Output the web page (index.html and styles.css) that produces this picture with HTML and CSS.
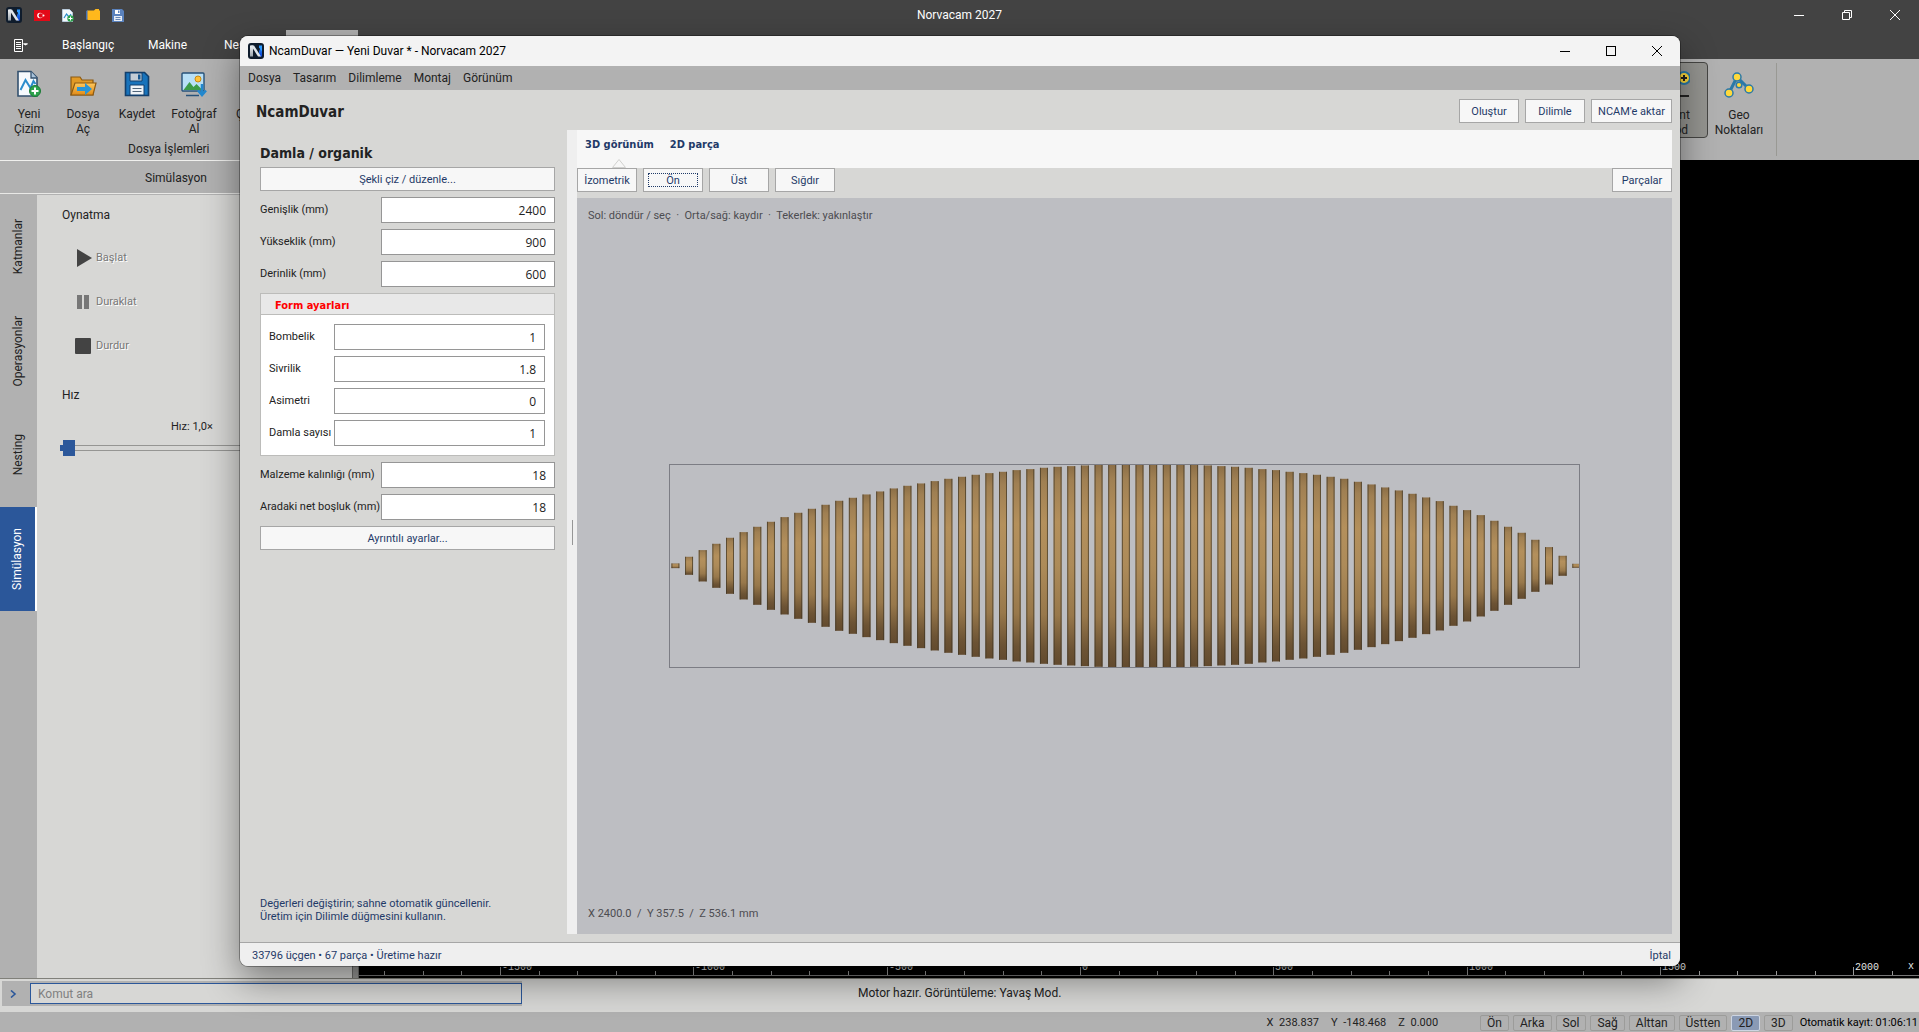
FILE: index.html
```html
<!DOCTYPE html>
<html lang="tr">
<head>
<meta charset="utf-8">
<title>Norvacam 2027</title>
<link rel="stylesheet" href="styles.css">
</head>
<body>
<svg class="defs" aria-hidden="true">
  <defs>
    <linearGradient id="steel" x1="0" y1="0" x2="0" y2="1"><stop offset="0" stop-color="#f4f6f8"/><stop offset="1" stop-color="#98a2ab"/></linearGradient>
    <linearGradient id="blue" x1="0" y1="0" x2="0" y2="1"><stop offset="0" stop-color="#2e9bff"/><stop offset="1" stop-color="#0a3fd0"/></linearGradient>
    <linearGradient id="folder" x1="0" y1="0" x2="0" y2="1"><stop offset="0" stop-color="#ffc95e"/><stop offset="1" stop-color="#e08a17"/></linearGradient>
    <linearGradient id="wood" x1="0" y1="0" x2="0" y2="1">
      <stop offset="0" stop-color="#8c6f47"/><stop offset=".07" stop-color="#a08053"/><stop offset=".28" stop-color="#b4905c"/>
      <stop offset=".5" stop-color="#ad8b59"/><stop offset=".75" stop-color="#98784b"/><stop offset=".92" stop-color="#6c5334"/><stop offset="1" stop-color="#624a2e"/>
    </linearGradient>
    <symbol id="logo" viewBox="0 0 16 16">
      <rect width="16" height="16" rx="3" fill="#0f1c2c"/>
      <path d="M11 13.500V8L14 2.500v11z" fill="url(#blue)"/>
      <path d="M11 2.500h3v6l-3-4z" fill="#2e9bff"/>
      <path d="M2 13.500v-11h3v11z" fill="url(#steel)"/>
      <path d="M3 2.500h3l7 11h-3z" fill="#dfe5ea"/>
    </symbol>
    <symbol id="newdoc" viewBox="0 0 28 28">
      <path d="M3 1.500h13l6 6V26H3z" fill="#f6fafd" stroke="#32506e" stroke-width="1.600"/>
      <path d="M16 1.500V8h6" fill="#a9c4dc" stroke="#32506e" stroke-width="1.300"/>
      <path d="M5.500 20l5-10 5 8 3-7 2 3" fill="none" stroke="#2a8ccc" stroke-width="2"/>
      <circle cx="20" cy="21" r="5.500" fill="#2ca24c" stroke="#1b7b36"/>
      <path d="M20 17.500v7M16.500 21h7" stroke="#fff" stroke-width="2"/>
    </symbol>
    <symbol id="save" viewBox="0 0 28 28">
      <path d="M2.500 2.500h19l4 4v19h-23z" fill="#1873bb" stroke="#123f6c" stroke-width="1.600"/>
      <path d="M7 3h12v8H7z" fill="#c4cdd6" stroke="#123f6c"/><path d="M15 4.500h2.500v5H15z" fill="#16568f"/>
      <path d="M7 15h14v10H7z" fill="#eef3f8" stroke="#123f6c"/><path d="M9.500 18.500h9M9.500 21.500h9" stroke="#50657a"/>
    </symbol>
  </defs>
</svg>

<div class="app">
  <header class="caption">
    <div class="quick">
      <svg class="i16" viewBox="0 0 16 16"><use href="#logo"/></svg>
      <svg class="flag" viewBox="0 0 16 11"><rect width="16" height="11" fill="#e30a17"/><circle cx="6" cy="5.500" r="2.800" fill="#fff"/><circle cx="6.800" cy="5.500" r="2.200" fill="#e30a17"/><circle cx="9.500" cy="5.500" r="1" fill="#fff"/></svg>
      <svg class="i12" viewBox="0 0 12 13"><path d="M.5.500h7l3 3v9h-10z" fill="#f4f9fd" stroke="#b9cbdc"/><path d="M2 9l2.500-4L7 8l2-3" fill="none" stroke="#2a8ccc" stroke-width="1.200"/><circle cx="8.500" cy="9.500" r="3.200" fill="#2ca24c"/><path d="M8.500 7.500v4M6.500 9.500h4" stroke="#fff"/></svg>
      <svg class="i14" viewBox="0 0 14 12"><path d="M0 2l2-1v9l-2 1z" fill="#4571b5"/><path d="M1.500 1.500L8 1.500 9.500 0H13v1.500h1V11H1.500z" fill="#ffb81c"/></svg>
      <svg class="i12" viewBox="0 0 12 13"><path d="M0 0h10l2 2v11H0z" fill="#5a82bd"/><path d="M3 1h5v4H3z" fill="#fff"/><path d="M6 1.500h1.500v2.500H6z" fill="#5a82bd"/><path d="M2 7h8v5H2z" fill="#e6edf7"/><path d="M3.500 8.500h5M3.500 10.500h5" stroke="#6787b5"/></svg>
    </div>
    <h1 class="caption-title">Norvacam 2027</h1>
    <div class="win-buttons">
      <button aria-label="Simge durumuna küçült"><svg viewBox="0 0 10 10"><path d="M0 5.500h10" stroke="currentColor"/></svg></button>
      <button aria-label="Geri yükle"><svg viewBox="0 0 10 10"><path d="M.5 2.500h7v7h-7zM2.500 2.500v-2h7v7h-2" fill="none" stroke="currentColor"/></svg></button>
      <button aria-label="Kapat"><svg viewBox="0 0 10 10"><path d="M0 0l10 10M10 0L0 10" stroke="currentColor"/></svg></button>
    </div>
  </header>
  <nav class="tabs">
    <button class="file-tab" aria-label="Dosya menüsü"><svg viewBox="0 0 14 13"><path d="M.5.500h8v12h-8zM2 3.500h5M2 5.500h5M2 7.500h5M2 9.500h5M9.500 5h4" fill="none" stroke="#fff"/><path d="M9 4.500h5l-2.500 2z" fill="#fff"/></svg></button>
    <button class="tab tab-start">Başlangıç</button>
    <button class="tab tab-machine">Makine</button>
    <button class="tab tab-nest">Nesting</button>
    <button class="tab active" aria-label="Simülasyon"></button>
  </nav>
  <section class="ribbon">
    <div class="group">
      <div class="tools">
        <button class="tool"><svg viewBox="0 0 28 28"><use href="#newdoc"/></svg>Yeni<br>Çizim</button>
        <button class="tool"><svg viewBox="0 0 28 28"><path d="M2 25V7h9l2 3h11v15z" fill="#e29a26" stroke="#8c5a12" stroke-width="1.200"/><path d="M2 25l4-12h21l-3 12z" fill="url(#folder)" stroke="#8c5a12" stroke-width="1.200"/><path d="M8 17h8v-4l7 6-7 6v-4H8z" fill="#2a95d5"/></svg>Dosya<br>Aç</button>
        <button class="tool"><svg viewBox="0 0 28 28"><use href="#save"/></svg>Kaydet</button>
        <button class="tool wide"><svg viewBox="0 0 28 28"><rect x="2" y="3" width="22" height="18" rx="1" fill="#b8e0f7" stroke="#27527a" stroke-width="1.400"/><circle cx="18" cy="9" r="3" fill="#ffc23a" stroke="#c98a12"/><path d="M3.500 20l6-8 4 5 3-3 6 6z" fill="#3c9c48"/><path d="M6 25.500h13" stroke="#27527a" stroke-width="1.500"/><path d="M22 14v10M18 20.500l4 4.500 4-4.500" fill="none" stroke="#2389cf" stroke-width="2.500"/></svg>Fotoğraf<br>Al</button>
        <button class="tool"><svg viewBox="0 0 28 28"></svg>Çizim<br>Gör</button>
      </div>
      <div class="group-name">Dosya İşlemleri</div>
    </div>
    <div class="group right">
      <button class="tool pressed"><svg viewBox="0 0 28 28"><circle cx="22" cy="7" r="6" fill="#ffd93b" stroke="#2a79a8" stroke-width="2"/><path d="M22 4v6M19 7h6" stroke="#222" stroke-width="2"/><path d="M4 25h23" stroke="#222" stroke-width="2"/></svg>Point<br>Mod</button>
      <button class="tool geo"><svg viewBox="0 0 30 28"><path d="M5 22L13 6l12 12" fill="none" stroke="#2a79a8" stroke-width="3"/><g fill="#ffd93b" stroke="#2a79a8" stroke-width="1.500"><circle cx="13" cy="6" r="4"/><circle cx="5" cy="22" r="4"/><circle cx="25" cy="18" r="4"/><circle cx="15" cy="14" r="2.800"/></g></svg>Geo<br>Noktaları</button>
    </div>
  </section>

  <main class="workspace">
    <aside class="side">
      <h2 class="side-title">Simülasyon</h2>
      <div class="side-body">
        <nav class="vtabs">
          <button>Katmanlar</button><button>Operasyonlar</button><button>Nesting</button><button class="on">Simülasyon</button>
        </nav>
        <div class="sim">
          <h3>Oynatma</h3>
          <button class="play"><svg viewBox="0 0 18 18"><path d="M3 0l15 9-15 9z" fill="#434343"/></svg>Başlat</button>
          <button class="play"><svg viewBox="0 0 18 18"><path d="M3 2h5v14H3zM10 2h5v14h-5z" fill="#777"/></svg>Duraklat</button>
          <button class="play"><svg viewBox="0 0 18 18"><rect x="1" y="1" width="16" height="16" rx="1" fill="#434343"/></svg>Durdur</button>
          <h3 class="speed">Hız</h3>
          <label for="speed">Hız: 1,0×</label>
          <input id="speed" type="range" min="1" max="10" value="1">
        </div>
      </div>
    </aside>
    <div class="splitter"></div>
    <div class="canvas"><svg class="ruler" id="ruler"></svg></div>
  </main>

  <div class="command">
    <div class="command-box">
      <svg viewBox="0 0 8 8"><path d="M1 .5L5 4 1 7.500" fill="none" stroke="#2b579a" stroke-width="1.600"/></svg>
      <input type="text" placeholder="Komut ara" aria-label="Komut ara">
    </div>
    <div class="message">Motor hazır. Görüntüleme: Yavaş Mod.</div>
  </div>
  <footer class="status">
    <div class="coords"><span>X&ensp;238.837</span><span>Y&ensp;-148.468</span><span>Z&ensp;0.000</span></div>
    <div class="views">
      <button>Ön</button><button>Arka</button><button>Sol</button><button>Sağ</button><button>Alttan</button><button>Üstten</button><button class="on">2D</button><button>3D</button>
    </div>
    <span class="autosave">Otomatik kayıt: 01:06:11</span>
  </footer>
</div>

<section class="window">
  <header class="w-caption">
    <svg class="i16" viewBox="0 0 16 16"><use href="#logo"/></svg>
    <h2>NcamDuvar — Yeni Duvar * - Norvacam 2027</h2>
    <div class="w-buttons">
      <button aria-label="Simge durumuna küçült"><svg viewBox="0 0 10 10"><path d="M0 5.500h10" stroke="currentColor"/></svg></button>
      <button aria-label="Ekranı kapla"><svg viewBox="0 0 10 10"><rect x=".5" y=".5" width="9" height="9" fill="none" stroke="currentColor"/></svg></button>
      <button aria-label="Kapat"><svg viewBox="0 0 10 10"><path d="M0 0l10 10M10 0L0 10" stroke="currentColor"/></svg></button>
    </div>
  </header>
  <nav class="menu"><button>Dosya</button><button>Tasarım</button><button>Dilimleme</button><button>Montaj</button><button>Görünüm</button></nav>
  <div class="w-head">
    <h2>NcamDuvar</h2>
    <button class="btn">Oluştur</button><button class="btn">Dilimle</button><button class="btn export">NCAM'e aktar</button>
  </div>
  <div class="w-body">
    <form class="props">
      <h3>Damla / organik</h3>
      <button type="button" class="btn">Şekli çiz / düzenle...</button>
      <div class="field"><label for="w">Genişlik (mm)</label><input id="w" type="text" value="2400"></div>
      <div class="field"><label for="h">Yükseklik (mm)</label><input id="h" type="text" value="900"></div>
      <div class="field"><label for="d">Derinlik (mm)</label><input id="d" type="text" value="600"></div>
      <section class="form-box">
        <h4>Form ayarları</h4>
        <div class="form-fields">
          <div class="field"><label for="b">Bombelik</label><input id="b" type="text" value="1"></div>
          <div class="field"><label for="s">Sivrilik</label><input id="s" type="text" value="1.8"></div>
          <div class="field"><label for="a">Asimetri</label><input id="a" type="text" value="0"></div>
          <div class="field"><label for="n">Damla sayısı</label><input id="n" type="text" value="1"></div>
        </div>
      </section>
      <div class="field"><label for="t">Malzeme kalınlığı (mm)</label><input id="t" type="text" value="18"></div>
      <div class="field"><label for="g">Aradaki net boşluk (mm)</label><input id="g" type="text" value="18"></div>
      <button type="button" class="btn">Ayrıntılı ayarlar...</button>
      <p>Değerleri değiştirin; sahne otomatik güncellenir.<br>Üretim için Dilimle düğmesini kullanın.</p>
    </form>
    <div class="grip"></div>
    <div class="viewer">
      <div class="v-tabs">
        <button class="on">3D görünüm<svg viewBox="0 0 14 9"><path d="M.5 8.500L7 .5l6.500 8z" fill="#f7f7f7" stroke="#d0d0ce"/></svg></button>
        <button>2D parça</button>
      </div>
      <div class="v-tools">
        <button class="btn">İzometrik</button><button class="btn focus">Ön</button><button class="btn">Üst</button><button class="btn">Sığdır</button><button class="btn last">Parçalar</button>
      </div>
      <div class="scene">
        <svg id="slats" viewBox="0 0 1095 736"></svg>
        <span class="hint">Sol: döndür / seç &nbsp;·&nbsp; Orta/sağ: kaydır &nbsp;·&nbsp; Tekerlek: yakınlaştır</span>
        <span class="dims">X 2400.0 &nbsp;/&nbsp; Y 357.5 &nbsp;/&nbsp; Z 536.1 mm</span>
      </div>
    </div>
  </div>
  <footer class="w-status"><span>33796 üçgen • 67 parça • Üretime hazır</span><a href="#">İptal</a></footer>
</section>
<script src="scene.js"></script>
</body>
</html>
```
FILE: styles.css
```css
:root {
  --dark: #434343;
  --gray: #b1b1b1;
  --panel: #d7d7d5;
  --accent: #2b579a;
  --navy: #1f3a68;
  --ui: Roboto, "Noto Sans", sans-serif;
  --strong: "DejaVu Sans Condensed", "DejaVu Sans", sans-serif;
}
* { box-sizing: border-box; }
body { margin: 0; font: 12px/15px var(--ui); color: #222; overflow: hidden; }
h1, h2, h3, h4, p { margin: 0; font-size: inherit; font-weight: inherit; }
button { font: inherit; color: inherit; background: none; border: 0; padding: 0; white-space: nowrap; }
svg { display: block; flex: none; }
.defs { position: absolute; width: 0; height: 0; }
.i16 { width: 16px; height: 16px; }
.i14 { width: 14px; height: 12px; }
.i12 { width: 12px; height: 13px; }
.flag { width: 16px; height: 11px; }

.app { display: flex; flex-direction: column; height: 100vh; }

.caption { display: grid; grid-template-columns: 1fr auto 1fr; align-items: center; height: 30px; background: var(--dark); color: #fff; }
.caption-title { padding-top: 1px; }
.quick { display: flex; align-items: center; gap: 12px; padding-left: 6px; }
.win-buttons { display: flex; justify-content: flex-end; }
.win-buttons button { display: grid; place-items: center; width: 48px; height: 30px; }
.win-buttons svg, .w-buttons svg { width: 10px; height: 10px; }

.tabs { display: flex; align-items: stretch; height: 29px; background: var(--dark); color: #fff; }
.tab { text-align: left; padding-top: 2px; }
.file-tab { width: 62px; padding: 2px 0 0 14px; }
.file-tab svg { width: 14px; height: 13px; }
.tab-start { width: 86px; }
.tab-machine { width: 76px; }
.tab-nest { width: 62px; }
.tab.active { width: 72px; background: var(--gray); }

.ribbon { display: flex; justify-content: space-between; height: 101px; background: var(--gray); }
.group { display: flex; flex-direction: column; padding-left: 2px; }
.tools { display: flex; height: 83px; padding-top: 3px; }
.tool { display: flex; flex-direction: column; align-items: center; width: 54px; height: 75px; padding-top: 8px; text-align: center; }
.tool svg { width: 28px; height: 28px; margin-bottom: 9px; }
.tool.wide { width: 60px; }
.group-name { padding-left: 126px; line-height: 15px; }
.group.right { flex-direction: row; margin: 4px 142px 4px 0; border-right: 1px solid #999994; padding: 0; }
.tool.pressed { width: 64px; margin-top: -1px; height: 76px; background: #949490; border: 1px solid #454543; border-radius: 4px; }
.tool.geo { width: 62px; margin-right: 6px; }
.tool.geo svg { width: 30px; }

.workspace { display: flex; flex: 1; min-height: 0; }
.side { display: flex; flex-direction: column; width: 352px; background: var(--gray); border-top: 1px solid #f0f0ee; }
.side-title { height: 32px; line-height: 35px; text-align: center; }
.side-body { display: flex; flex: 1; border-top: 1px solid #e8e8e6; padding-top: 1px; }
.vtabs { display: flex; flex-direction: column; width: 37px; flex: none; }
.vtabs button { height: 104px; width: 37px; writing-mode: sideways-lr; text-align: center; }
.vtabs .on { background: var(--accent); color: #fff; width: 38px; border-right: 3px solid #fff; }
.sim { display: flex; flex-direction: column; flex: 1; background: var(--panel); padding: 13px 20px 0 23px; align-items: flex-start; }
.sim h3 { padding-left: 2px; }
.play { display: flex; align-items: center; gap: 4px; height: 20px; margin: 24px 0 0 14px; padding-top: 1px; font-size: 11px; color: #777; text-shadow: 1px 1px #fff; }
.play svg { width: 18px; height: 18px; }
.sim h3.speed { margin: 33px 0 16px; }
.sim label { padding-left: 111px; font-size: 11px; }
input[type=range] { appearance: none; width: 100%; height: 16px; margin: 6px 0 0; background: none; }
input[type=range]::-webkit-slider-runnable-track { height: 6px; border: solid #959593; border-width: 1px 0; }
input[type=range]::-webkit-slider-thumb { appearance: none; width: 15px; height: 16px; margin-top: -6px; background: linear-gradient(var(--accent), var(--accent)) right / 12px 16px no-repeat, linear-gradient(var(--accent), var(--accent)) left / 4px 6px no-repeat; }
.splitter { width: 7px; background: #9c9c9a; border: solid #6e6e6c; border-width: 0 1px; }
.canvas { display: flex; flex: 1; align-items: flex-end; background: #000; min-width: 0; }
.ruler { width: 100%; height: 22px; font: 10px "Liberation Mono", monospace; fill: #e4e4e4; }

.command { display: grid; grid-template-columns: 520px 1fr; align-items: start; height: 34px; padding: 2px 0 0 2px; background: var(--panel); border-top: 1px solid #80807a; }
.command-box { display: flex; align-items: center; height: 25px; background: var(--gray); padding-left: 8px; gap: 12px; }
.command-box svg { width: 8px; height: 8px; }
.command-box input { flex: 1; height: 21px; min-width: 0; background: var(--panel); border: 1px solid var(--accent); padding: 0 7px; font: inherit; }
.command-box input::placeholder { color: #808080; }
.message { padding-left: 336px; line-height: 24px; }

.status { display: flex; align-items: center; justify-content: flex-end; height: 20px; background: var(--gray); padding: 1px 1px 0 0; }
.coords { display: flex; gap: 12px; margin-right: 42px; font-size: 11px; }
.views { display: flex; gap: 4px; margin-right: 7px; }
.views button { height: 16px; padding: 0 6px; line-height: 14px; border: 1px solid #9c9c9a; border-radius: 2px; }
.views .on { background: #8a9ab5; border-color: #cdd5e2; }
.autosave { font-size: 11px; color: #000; }

/* Floating tool window above the application */
.window { position: absolute; inset: 36px 239px 66px 240px; display: flex; flex-direction: column; background: var(--panel); border-radius: 8px; overflow: hidden; box-shadow: 0 0 0 1px #00000050, 0 14px 36px #00000070; }
.w-caption { display: flex; align-items: center; height: 30px; background: #f3f3f3; color: #000; padding-left: 8px; gap: 5px; }
.w-caption h2 { flex: 1; }
.w-buttons { display: flex; }
.w-buttons button { display: grid; place-items: center; width: 46px; height: 30px; }
.menu { display: flex; gap: 12px; height: 24px; background: var(--gray); padding: 0 8px; }
.w-head { display: flex; align-items: center; gap: 6px; height: 40px; padding: 2px 8px 0 16px; }
.w-head h2 { flex: 1; font: bold 15px/20px var(--strong); padding-top: 1px; }
.btn { height: 24px; min-width: 60px; padding: 1px 6px 0; border: 1px solid #a6a6a6; background: #f7f7f7; color: var(--navy); font: 11px/15px var(--ui); }
.export { min-width: 81px; }
.w-body { display: flex; flex: 1; min-height: 0; padding-right: 8px; margin-bottom: 8px; }
.props { display: flex; flex-direction: column; gap: 6px; width: 327px; padding: 13px 12px 11px 20px; font-size: 11px; line-height: 13px; }
.props h3 { font: bold 14px/20px var(--strong); margin-bottom: -2px; }
.field { display: grid; grid-template-columns: 1fr 174px; align-items: center; height: 26px; white-space: nowrap; }
.field label { padding-bottom: 2px; }
.field input { width: 100%; height: 26px; border: 1px solid #969696; background: #fff; text-align: right; padding: 1px 8px 0; font: 12px/15px "Open Sans", sans-serif; color: #222; }
.form-box { height: 163px; border: 1px solid #bcbcba; background: #fff; }
.form-box h4 { height: 21px; padding-left: 14px; background: #e8e8e8; border-bottom: 1px solid #bcbcba; color: #f00; font: bold 11px/23px var(--strong); }
.form-fields { display: flex; flex-direction: column; gap: 6px; padding: 9px 9px 9px 8px; }
.form-fields .field { grid-template-columns: 1fr 211px; }
.props p { margin-top: auto; color: var(--navy); }
.grip { display: flex; align-items: center; justify-content: center; width: 10px; background: #efefef; }
.grip::before { content: ""; width: 1px; height: 25px; background: #969696; }
.viewer { display: flex; flex-direction: column; flex: 1; min-width: 0; }
.v-tabs { display: flex; gap: 16px; height: 38px; padding-left: 8px; background: #f7f7f7; color: var(--navy); font: bold 11px/29px var(--strong); }
.v-tabs button { display: flex; flex-direction: column; align-items: center; }
.v-tabs svg { width: 14px; height: 9px; }
.v-tools { display: flex; gap: 6px; height: 30px; }
.v-tools .last { margin-left: auto; }
.focus { outline: 1px dotted var(--navy); outline-offset: -6px; }
.scene { display: grid; flex: 1; min-height: 0; background: #bdbec2; color: #4c4c50; font-size: 11px; }
.scene > * { grid-area: 1 / 1; }
.scene svg { width: 100%; height: 100%; }
.hint { padding: 10px 11px; place-self: start; }
.dims { padding: 13px 11px; place-self: end start; }
.w-status { display: flex; justify-content: space-between; align-items: center; height: 24px; background: #efefef; border-top: 1px solid #a6a6a6; padding: 1px 9px 0 12px; color: var(--navy); font-size: 11px; }
.w-status a { color: inherit; text-decoration: none; }
```
FILE: scene.js
```js
const NS = "http://www.w3.org/2000/svg";
function add(parent, tag, attrs, text) {
  const el = document.createElementNS(NS, tag);
  for (const k in attrs) el.setAttribute(k, attrs[k]);
  if (text) el.textContent = text;
  parent.appendChild(el);
}

// Front view of the wall: half height of each slat, in thirds of a unit
const half = [7, 27, 47, 66, 84, 101, 117, 132, 146, 159, 171, 183, 195, 204, 214, 223, 232, 240, 247, 254, 261,
  267, 273, 278, 282, 287, 290, 294, 297, 299, 301, 303, 304, 304, 304, 304, 304, 304, 303, 301, 299, 297, 294,
  290, 287, 282, 278, 273, 267, 261, 252, 244, 235, 226, 216, 205, 194, 180, 167, 152, 135, 117, 99, 78, 56, 30, 6];
const scene = document.getElementById("slats");
half.forEach((h3, i) => {
  const h = h3 / 3, x = 94.4 + i * 13.65, w = i === 66 ? 7 : 8, y = 367.8 - h;
  add(scene, "rect", { x, y, width: w, height: 2 * h, fill: "url(#wood)" });
  add(scene, "rect", { x, y, width: 1, height: 2 * h, fill: "#3f3524", opacity: .7 });
  if (i < 66) add(scene, "rect", { x: x + w - 1, y, width: 1, height: 2 * h, fill: "#3f3524", opacity: .7 });
});
add(scene, "rect", { x: 92.5, y: 266.5, width: 910, height: 203, fill: "none", stroke: "#7c7d84" });

// Horizontal ruler: one tick per 100 mm, a label per 500 mm
const ruler = document.getElementById("ruler");
add(ruler, "rect", { x: 0, y: 19, width: "100%", height: 1, fill: "#777" });
for (let k = -18; k <= 21; k++) {
  const x = Math.round(721 + k * 38.66), major = k % 5 === 0;
  add(ruler, "rect", { x, y: major ? 11 : 15, width: 1, height: major ? 8 : 4, fill: "#999" });
  if (major) add(ruler, "text", { x: x + 2, y: 14 }, String(k * 100));
}
add(ruler, "text", { x: "100%", dx: -5, y: 13, "text-anchor": "end" }, "x");
```
